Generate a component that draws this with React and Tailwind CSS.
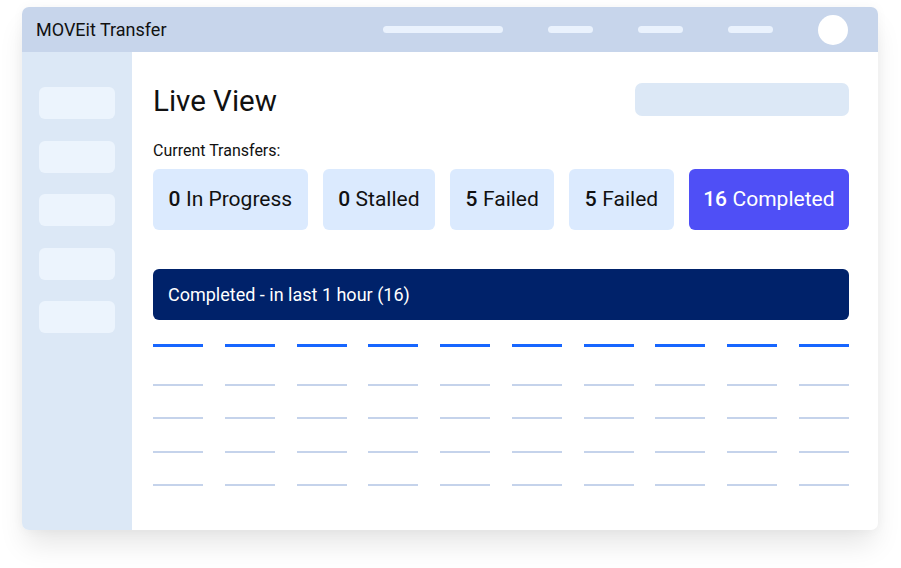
export default function App() {
  const cards = [
    { n: '0', label: 'In Progress' },
    { n: '0', label: 'Stalled' },
    { n: '5', label: 'Failed' },
    { n: '5', label: 'Failed' },
  ];
  const cols = Array.from({ length: 10 });
  const rows = Array.from({ length: 4 });

  return (
    <div className="min-h-screen w-full bg-white font-['Roboto',sans-serif]">
      <div className="pl-[22px] pt-[7px]">
        <div className="w-[856px] overflow-hidden rounded-[7px] bg-white shadow-[0_18px_28px_-4px_rgba(0,0,0,0.10),0_0_12px_rgba(0,0,0,0.04)]">
          {/* top bar */}
          <div className="flex h-[45px] items-center bg-[#c7d5eb] pl-[14px] pr-[30px]">
            <span className="text-[18px] text-[#111]">MOVEit Transfer</span>
            <div className="ml-auto flex items-center">
              <div className="h-[7px] w-[120px] rounded-full bg-[#eaf2fd]" />
              <div className="ml-[45px] h-[7px] w-[45px] rounded-full bg-[#eaf2fd]" />
              <div className="ml-[45px] h-[7px] w-[45px] rounded-full bg-[#eaf2fd]" />
              <div className="ml-[45px] h-[7px] w-[45px] rounded-full bg-[#eaf2fd]" />
              <div className="ml-[45px] h-[30px] w-[30px] rounded-full bg-white" />
            </div>
          </div>

          <div className="flex h-[478px]">
            {/* sidebar */}
            <div className="flex w-[110px] flex-col gap-[21.5px] bg-[#dce8f6] pl-[17px] pt-[35px]">
              {[0, 1, 2, 3, 4].map((i) => (
                <div key={i} className="h-[32px] w-[76px] rounded-[6px] bg-[#ecf4fd]" />
              ))}
            </div>

            {/* content */}
            <div className="flex-1 pl-[21px] pr-[29px] pt-[31px]">
              <div className="flex items-start justify-between">
                <h1 className="mt-[1px] text-[29.5px] leading-[34px] text-[#111]">Live View</h1>
                <div className="h-[33px] w-[214px] rounded-[7px] bg-[#dce8f6]" />
              </div>

              <div className="mt-[24px] text-[16px] leading-[18px] text-[#111]">Current Transfers:</div>

              <div className="mt-[9px] flex gap-[15px]">
                {cards.map((c, i) => (
                  <div
                    key={i}
                    className="flex h-[61px] items-center rounded-[6px] bg-[#dbeafe] px-[15.5px] text-[21px] text-[#111]"
                  >
                    <span className="font-medium">{c.n}</span>
                    <span className="ml-[5.5px]">{c.label}</span>
                  </div>
                ))}
                <div className="flex h-[61px] flex-1 items-center justify-center rounded-[6px] bg-[#4f4ff6] text-[21px] text-white">
                  <span className="font-medium">16</span>
                  <span className="ml-[5.5px]">Completed</span>
                </div>
              </div>

              <div className="mt-[39px] flex h-[51px] items-center rounded-[6px] bg-[#00226a] pl-[15px] text-[18px] text-white">
                Completed - in last 1 hour (16)
              </div>

              <div className="mt-[24px] flex justify-between">
                {cols.map((_, i) => (
                  <div key={i} className="h-[2.5px] w-[50px] bg-[#1766ff]" />
                ))}
              </div>
              {rows.map((_, r) => (
                <div key={r} className={`flex justify-between ${r === 0 ? 'mt-[37px]' : 'mt-[31.5px]'}`}>
                  {cols.map((_, i) => (
                    <div key={i} className="h-[2px] w-[50px] bg-[#c5d3eb]" />
                  ))}
                </div>
              ))}
            </div>
          </div>
        </div>
      </div>
    </div>
  );
}
